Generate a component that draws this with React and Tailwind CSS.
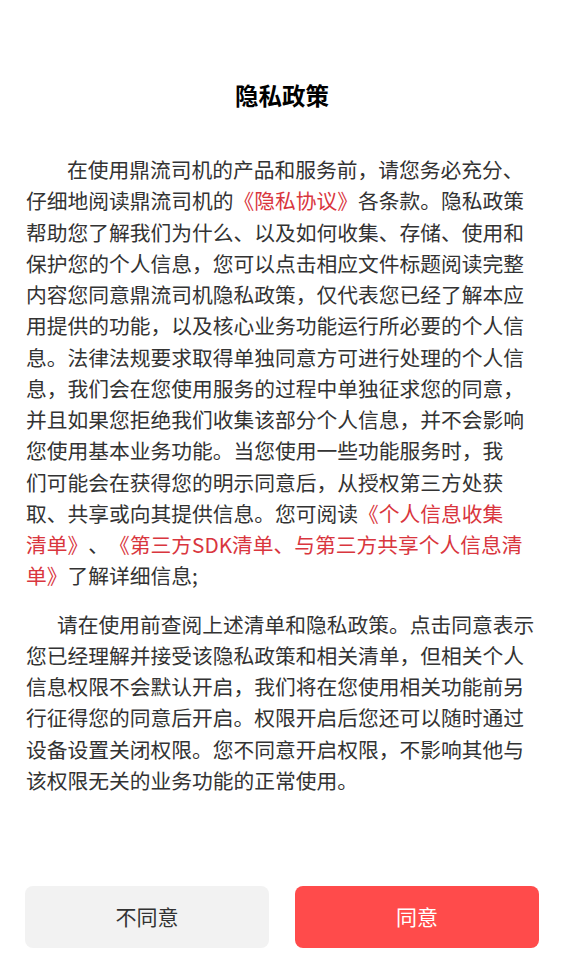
const RED = 'text-[#d9363e]'

const para1 = [
  [{ t: '在使用鼎流司机的产品和服务前，请您务必充分、' }],
  [{ t: '仔细地阅读鼎流司机的' }, { t: '《隐私协议》', red: true }, { t: '各条款。隐私政策' }],
  [{ t: '帮助您了解我们为什么、以及如何收集、存储、使用和' }],
  [{ t: '保护您的个人信息，您可以点击相应文件标题阅读完整' }],
  [{ t: '内容您同意鼎流司机隐私政策，仅代表您已经了解本应' }],
  [{ t: '用提供的功能，以及核心业务功能运行所必要的个人信' }],
  [{ t: '息。法律法规要求取得单独同意方可进行处理的个人信' }],
  [{ t: '息，我们会在您使用服务的过程中单独征求您的同意，' }],
  [{ t: '并且如果您拒绝我们收集该部分个人信息，并不会影响' }],
  [{ t: '您使用基本业务功能。当您使用一些功能服务时，我' }],
  [{ t: '们可能会在获得您的明示同意后，从授权第三方处获' }],
  [{ t: '取、共享或向其提供信息。您可阅读' }, { t: '《个人信息收集', red: true }],
  [{ t: '清单》', red: true }, { t: '、' }, { t: '《第三方SDK清单、与第三方共享个人信息清', red: true }],
  [{ t: '单》', red: true }, { t: '了解详细信息;' }],
]

const para2 = [
  '请在使用前查阅上述清单和隐私政策。点击同意表示',
  '您已经理解并接受该隐私政策和相关清单，但相关个人',
  '信息权限不会默认开启，我们将在您使用相关功能前另',
  '行征得您的同意后开启。权限开启后您还可以随时通过',
  '设备设置关闭权限。您不同意开启权限，不影响其他与',
  '该权限无关的业务功能的正常使用。',
]

export default function App() {
  return (
    <div
      className="h-[971px] w-full bg-white flex flex-col text-[#333333] [text-spacing-trim:space-all]"
      style={{ fontFamily: '"Noto Sans CJK SC", "Noto Sans", sans-serif' }}
    >
      <h1 className="pt-[78px] text-center text-[23.5px] leading-[35px] font-bold text-black">隐私政策</h1>

      <div className="mt-[41px] px-[26px] text-[20.75px] leading-[31.25px]">
        {para1.map((line, i) => (
          <div key={i} className={`whitespace-nowrap ${i === 0 ? 'pl-[41px]' : ''}`}>
            {line.map((s, j) => (
              <span key={j} className={s.red ? RED : ''}>{s.t}</span>
            ))}
          </div>
        ))}
      </div>

      <div className="mt-[17px] px-[26px] text-[20.75px] leading-[31.25px]">
        {para2.map((line, i) => (
          <div key={i} className={`whitespace-nowrap ${i === 0 ? 'pl-[31px]' : ''}`}>{line}</div>
        ))}
      </div>

      <div className="mt-auto flex gap-[26px] px-[25px] pb-[23px]">
        <button type="button" className="flex-1 h-[62px] rounded-lg bg-[#f2f2f2] text-[21px] text-[#333333]">
          不同意
        </button>
        <button type="button" className="flex-1 h-[62px] rounded-lg bg-[#ff4b4b] text-[21px] text-white">
          同意
        </button>
      </div>
    </div>
  )
}
